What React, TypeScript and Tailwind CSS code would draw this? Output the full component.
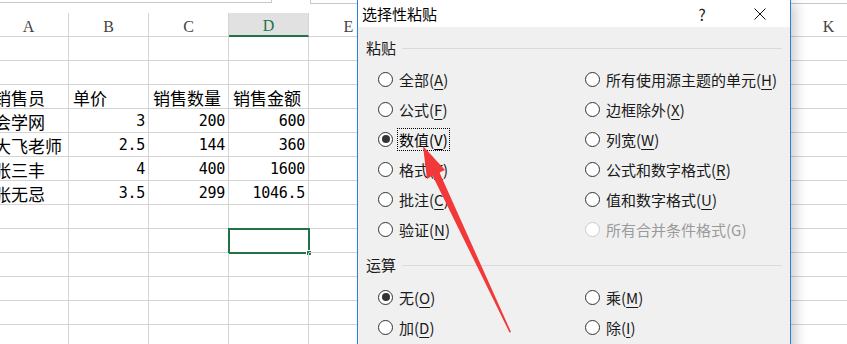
import React from 'react';

const cols = ['A', 'B', 'C', 'D', 'E', 'F', 'G', 'H', 'I', 'J', 'K'];

const data: string[][] = [
  [],
  [],
  ['销售员', '单价', '销售数量', '销售金额'],
  ['会学网', '3', '200', '600'],
  ['大飞老师', '2.5', '144', '360'],
  ['张三丰', '4', '400', '1600'],
  ['张无忌', '3.5', '299', '1046.5'],
  [],
  [],
  [],
  [],
  [],
  [],
];

const isNum = (s: string) => /^[\d.]+$/.test(s);

function Sheet() {
  return (
    <div className="flex flex-col">
      <div className="flex h-[13px]">
        <div className="w-[272px] h-[3px] border-b border-r border-[#c8c8c8]" />
        <div className="ml-[38px] flex-1 h-[4px] border-b border-l border-[#c8c8c8]" />
      </div>
      <div className="flex ml-[-11px]">
        {cols.map((c) => (
          <div
            key={c}
            className={
              c === 'D'
                ? 'w-[80px] shrink-0 h-[24px] bg-[#e1e1e1] border-r border-[#d4d4d4] border-b-2 border-b-[#217346] flex items-center justify-center pt-[4px] text-[#217346] text-[16px]'
                : 'w-[80px] shrink-0 h-[24px] border-r border-b border-[#d4d4d4] flex items-center justify-center pt-[4px] text-[#444] text-[16px]'
            }
            style={{ fontFamily: '"Liberation Serif", serif' }}
          >
            {c}
          </div>
        ))}
      </div>
      {data.map((row, ri) => (
        <div key={ri} className="flex ml-[-11px]">
          {cols.map((c, ci) => {
            const v = row[ci] ?? '';
            const sel = ri === 8 && c === 'D';
            const num = v !== '' && isNum(v);
            return (
              <div
                key={c}
                className={
                  'relative w-[80px] shrink-0 h-[24px] border-r border-b border-[#d4d4d4] flex items-center whitespace-nowrap text-black ' +
                  (num
                    ? 'justify-end pr-[3px] text-[15px] pt-[1px]'
                    : ci === 0
                    ? 'pl-[5px] text-[17px] pt-[2px]'
                    : 'pl-[4px] text-[17px] pt-[2px]')
                }
                style={{
                  fontFamily: num
                    ? '"DejaVu Sans Mono", monospace'
                    : '"Noto Sans CJK SC", sans-serif',
                  letterSpacing: num ? '-0.3px' : undefined,
                }}
              >
                {v}
                {sel && (
                  <>
                    <div className="absolute left-[-1px] top-[-1px] w-[82px] h-[26px] border-2 border-[#217346]" />
                    <div className="absolute right-[-4px] bottom-[-4px] w-[6px] h-[6px] bg-[#217346] border border-white" />
                  </>
                )}
              </div>
            );
          })}
        </div>
      ))}
    </div>
  );
}

type RadioProps = {
  pre: string;
  acc?: string;
  checked?: boolean;
  disabled?: boolean;
  focus?: boolean;
};

function Radio({ pre, acc, checked, disabled, focus }: RadioProps) {
  const label = (
    <>
      {pre}
      {acc ? (
        <>
          (<span className="underline underline-offset-[3px] decoration-1">{acc}</span>)
        </>
      ) : null}
    </>
  );
  return (
    <div className="h-[30px] flex items-center">
      <div
        className={
          'w-[15px] h-[15px] rounded-full border bg-white flex items-center justify-center shrink-0 ' +
          (disabled ? 'border-[#cccccc]' : 'border-[#333333]')
        }
      >
        {checked && <div className="w-[8px] h-[8px] rounded-full bg-[#333333]" />}
      </div>
      {focus ? (
        <span className="ml-[4px] h-[23px] leading-[21px] px-[1px] border border-dotted border-black whitespace-nowrap">
          {label}
        </span>
      ) : (
        <span
          className={
            'ml-[6px] whitespace-nowrap leading-[21px] ' +
            (disabled ? 'text-[#9a9a9a]' : 'text-[#1a1a1a]')
          }
        >
          {label}
        </span>
      )}
    </div>
  );
}

function Section({ title }: { title: string }) {
  return (
    <div className="h-[20px] flex items-center pl-[8px] pr-[8px]">
      <span className="text-[15px] leading-[20px] text-[#1a1a1a]">{title}</span>
      <div className="flex-1 h-px bg-[#dadada] ml-[6px]" />
    </div>
  );
}

function Dialog() {
  return (
    <div
      className="absolute left-[357px] top-0 w-[434px] h-[360px] border-l border-r border-[#2d7fd3] bg-[#f0f0f0] shadow-[6px_0_12px_-2px_rgba(0,0,0,0.22)] flex flex-col text-[15px]"
      style={{ fontFamily: '"Noto Sans CJK SC", sans-serif' }}
    >
      <div className="h-[27px] bg-white flex items-center shrink-0">
        <span className="pl-[4px] text-black leading-none">选择性粘贴</span>
        <div className="ml-auto flex items-center pr-[7px]">
          <div className="w-[30px] text-center text-[16px] leading-none text-[#222]">?</div>
          <div className="w-[46px] ml-[20px] flex items-center justify-center">
            <svg width="12" height="12" viewBox="0 0 12 12">
              <path d="M0.5 0.5 L11.5 11.5 M11.5 0.5 L0.5 11.5" stroke="#111" strokeWidth="1" fill="none" />
            </svg>
          </div>
        </div>
      </div>
      <div className="mt-[11px]">
        <Section title="粘贴" />
      </div>
      <div className="mt-[6px] pl-[20px] grid grid-cols-[207px_1fr]">
        <Radio pre="全部" acc="A" />
        <Radio pre="所有使用源主题的单元" acc="H" />
        <Radio pre="公式" acc="F" />
        <Radio pre="边框除外" acc="X" />
        <Radio pre="数值" acc="V" checked focus />
        <Radio pre="列宽" acc="W" />
        <Radio pre="格式" acc="T" />
        <Radio pre="公式和数字格式" acc="R" />
        <Radio pre="批注" acc="C" />
        <Radio pre="值和数字格式" acc="U" />
        <Radio pre="验证" acc="N" />
        <Radio pre="所有合并条件格式(G)" disabled />
      </div>
      <div className="mt-[11px]">
        <Section title="运算" />
      </div>
      <div className="mt-[7px] pl-[20px] grid grid-cols-[207px_1fr]">
        <Radio pre="无" acc="O" checked />
        <Radio pre="乘" acc="M" />
        <Radio pre="加" acc="D" />
        <Radio pre="除" acc="I" />
      </div>
    </div>
  );
}

export default function App() {
  return (
    <div className="relative w-[847px] h-[344px] overflow-hidden bg-white">
      <Sheet />
      <Dialog />
      <svg className="absolute left-0 top-0 pointer-events-none" width="847" height="344" viewBox="0 0 847 344">
        <polygon
          points="423,146 445,170 439.5,172.5 511,332 509.5,332.5 432.5,175.5 427,179"
          fill="#f2393a"
        />
      </svg>
    </div>
  );
}
